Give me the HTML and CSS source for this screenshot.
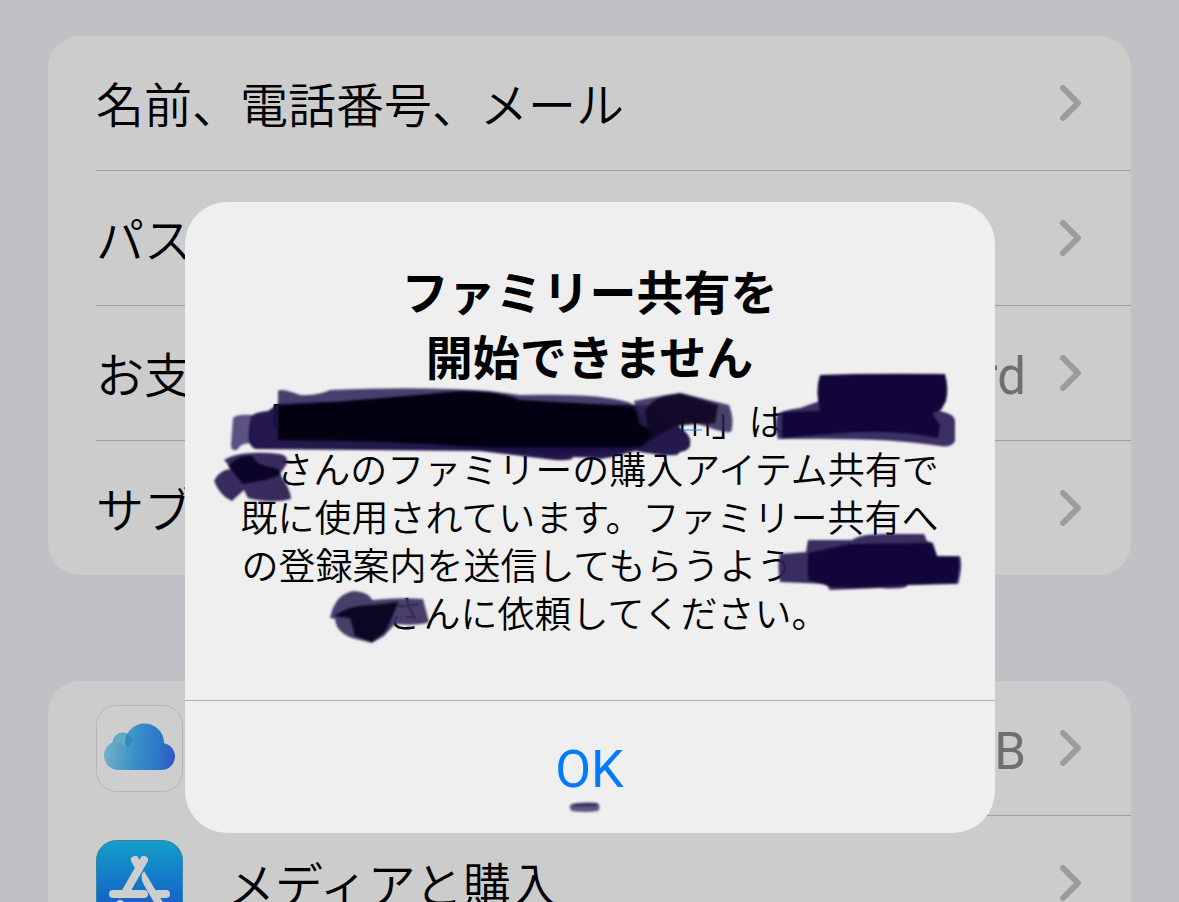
FILE: index.html
```html
<!DOCTYPE html>
<html lang="ja">
<head>
    <meta charset="UTF-8">
    <meta name="viewport" content="width=device-width, initial-scale=1.0">
    <title>ファミリー共有</title>
    <link rel="stylesheet" href="styles.css">
</head>
<body>
    <main class="settings">
        <ul class="group">
            <li class="row">
                <span class="label">名前、電話番号、メール</span>
                <svg class="chevron" viewBox="0 0 22 36"><path d="M3 3 L18 18 L3 33"/></svg>
            </li>
            <li class="row">
                <span class="label">パスワード</span>
                <svg class="chevron" viewBox="0 0 22 36"><path d="M3 3 L18 18 L3 33"/></svg>
            </li>
            <li class="row">
                <span class="label">お支払い</span>
                <span class="value">Card</span>
                <svg class="chevron" viewBox="0 0 22 36"><path d="M3 3 L18 18 L3 33"/></svg>
            </li>
            <li class="row">
                <span class="label">サブスク</span>
                <svg class="chevron" viewBox="0 0 22 36"><path d="M3 3 L18 18 L3 33"/></svg>
            </li>
        </ul>

        <ul class="group">
            <li class="row with-icon">
                <svg class="icon" viewBox="0 0 87 87">
                    <defs>
                        <linearGradient id="cloud" gradientUnits="userSpaceOnUse" x1="8" y1="50" x2="79" y2="58">
                            <stop offset="0" stop-color="#73b0c8"/>
                            <stop offset="0.45" stop-color="#368fc9"/>
                            <stop offset="0.75" stop-color="#2c77c8"/>
                            <stop offset="1" stop-color="#3056c6"/>
                        </linearGradient>
                    </defs>
                    <rect x="0.5" y="0.5" width="86" height="86" rx="20" fill="#cecece" stroke="#b5b5b7"/>
                    <g fill="url(#cloud)">
                        <circle cx="27" cy="38" r="10.5"/>
                        <circle cx="22.5" cy="50.5" r="14.5"/>
                        <circle cx="48.5" cy="38" r="19.5"/>
                        <circle cx="65.5" cy="51.5" r="13.5"/>
                        <rect x="22" y="42" width="44" height="23"/>
                    </g>
                    <path d="M17 37 A10.5 10.5 0 0 1 31 28.5 Q28 35 29 42 Q23 36 17 37 Z" fill="#5faac4"/>
                    <path d="M31 28.5 Q35 31 37 35 Q35 40 31 43 Q28 36 31 28.5 Z" fill="#3489b5"/>
                    <path d="M67.5 38 Q67 43 64 47" fill="none" stroke="#2d66bd" stroke-width="1" opacity="0.5"/>
                </svg>
                <span class="label">iCloud</span>
                <span class="value">GB</span>
                <svg class="chevron" viewBox="0 0 22 36"><path d="M3 3 L18 18 L3 33"/></svg>
            </li>
            <li class="row with-icon">
                <svg class="icon" viewBox="0 0 87 87">
                    <defs>
                        <linearGradient id="store" x1="0" y1="0" x2="0" y2="1">
                            <stop offset="0" stop-color="#149fc9"/>
                            <stop offset="0.7" stop-color="#1565c8"/>
                            <stop offset="1" stop-color="#1553c0"/>
                        </linearGradient>
                    </defs>
                    <rect x="0.5" y="0.5" width="86" height="86" rx="20" fill="url(#store)" stroke="#2d86a8"/>
                    <g fill="none" stroke="#cecece" stroke-width="8" stroke-linecap="round">
                        <path d="M48 20 L29 53"/>
                        <path d="M39 20 L43 27"/>
                        <path d="M17 54 H48"/>
                        <path d="M62 54 H70"/>
                        <path d="M24 64 L21 68"/>
                    </g>
                    <path d="M48 31 Q43 36 48 45 L63 71 Q67 75 71 69 Z" fill="#cecece"/>
                </svg>
                <span class="label">メディアと購入</span>
                <svg class="chevron" viewBox="0 0 22 36"><path d="M3 3 L18 18 L3 33"/></svg>
            </li>
        </ul>
    </main>

    <div class="overlay">
        <div class="alert" role="alertdialog" aria-labelledby="alert-title" aria-describedby="alert-text">
            <div class="alert-body">
                <h1 class="alert-title" id="alert-title">ファミリー共有を<br>開始できません</h1>
                <p class="alert-text" id="alert-text">
                    「<span class="hidden mail"></span>m」は<span class="hidden name"></span><br>
                    <span class="hidden char"></span>さんのファミリーの購入アイテム共有で<br>
                    既に使用されています。ファミリー共有へ<br>
                    の登録案内を送信してもらうよう<span class="hidden name"></span><br>
                    <span class="hidden char"></span>さんに依頼してください。
                </p>
            </div>
            <button type="button" class="alert-button">OK</button>

            <!-- marker strokes -->
            <svg class="marker" viewBox="185 202 810 631" aria-hidden="true">
                <defs>
                    <filter id="soft" x="-5%" y="-5%" width="110%" height="110%" color-interpolation-filters="sRGB">
                        <feGaussianBlur stdDeviation="1"/>
                    </filter>
                </defs>
                <path d="M678 430 H702" stroke="#2f7de0" stroke-width="1"/>
                <g filter="url(#soft)">
                    <!-- mail address -->
                    <path fill="#3a2f62" opacity="0.92" d="M278 391 Q281 388 300 395 Q318 396 330 390 Q420 386 490 391 L520 395 Q600 393 628 402 L636 406 L634 450 L550 455 L278 430 Z"/>
                    <path fill="#4a3f75" opacity="0.9" d="M233 418 Q237 414 252 415 L252 443 Q240 443 238 449 Q231 453 231 444 Z"/>
                    <path fill="#1b0f45" opacity="0.96" d="M251 416 Q256 412 268 411 L278 404 L320 402 L640 405 Q662 404 672 421 L683 430 Q692 436 690 446 Q688 451 680 452 L677 455 Q660 456 635 451 L612 457 L600 459 Q588 457 573 457 Q573 461 555 460 L480 451 L256 449 Q247 447 249 430 Z"/>
                    <path fill="#020011" d="M278 406 Q380 399 460 391 Q500 391 520 400 L630 406 L655 424 Q654 440 640 447 L480 447 Q380 440 278 440 Z"/>
                    <path fill="#2c2252" opacity="0.85" d="M634 401 Q655 397 672 394 L681 393 L729 405 Q735 420 731 432 Q722 433 708 427 L690 422 L660 432 L640 425 Z"/>
                    <path fill="#100724" opacity="0.9" d="M645 411 Q654 396 672 395 L680 393 L718 405 L715 423 L697 424 L675 426 L650 440 Z"/>
                    <!-- name, first line -->
                    <path fill="#33275e" opacity="0.96" d="M777 415 Q779 411 800 408 L817 402 L935 408 L940 411 Q954 414 955 420 L955 441 Q952 448 940 446 Q890 437 778 439 Q774 428 777 415 Z"/>
                    <path fill="#12053a" d="M820 375 Q870 373 945 374 Q949 388 946 401 L941 410 L932 413 L940 425 L938 438 Q890 428 830 434 L782 438 L782 412 L820 411 Q815 390 820 375 Z"/>
                    <!-- left end of second line -->
                    <path fill="#2c2052" opacity="0.94" d="M224 460 Q240 450 280 454 Q290 456 286 465 L280 474 Q291 490 291 499 Q272 504 248 498 L244 490 L232 501 Q220 496 214 481 Q220 469 232 469 Z"/>
                    <path fill="#0c0428" d="M228 466 Q240 454 252 456 L259 464 L278 469 L281 475 L266 480 L243 484 Z"/>
                    <!-- name, fourth line -->
                    <path fill="#2f2359" opacity="0.95" d="M780 554 L806 552 L808 540 L852 540 Q860 534 885 534 L924 534 L927 541 L933 543 L937 556 L960 556 Q963 566 958 584 L908 585 Q906 590 880 588 L830 590 L826 584 L780 582 Q777 566 780 554 Z"/>
                    <path fill="#12053a" d="M808 553 L850 544 L932 543 L937 556 L958 557 Q960 570 956 583 L908 585 Q860 589 832 587 L808 580 Z"/>
                    <!-- left end of fifth line -->
                    <path fill="#3b3060" opacity="0.93" d="M330 618 Q335 593 355 591 Q370 593 372 600 Q400 597 423 599 L429 622 Q420 626 395 624 L384 636 L372 643 L352 638 Q336 632 335 619 Z"/>
                    <path fill="#07021d" opacity="0.93" d="M334 616 Q350 604 374 605 L398 602 Q392 619 385 632 L372 642 L355 636 L350 618 Z"/>
                    <!-- dash under the button -->
                    <path fill="#5e567f" d="M571 804 Q585 801 598 803 Q601 807 598 811 Q585 813 572 811 Q568 808 571 804 Z"/>
                    <path d="M573 805 H597" stroke="#2d2350" stroke-width="2"/>
                </g>
            </svg>
        </div>
    </div>
</body>
</html>
```
FILE: styles.css
```css
* {
    box-sizing: border-box;
}

body {
    margin: 0;
    height: 100vh;
    overflow: hidden;
    background-color: #c1c0c6;
    color: #000;
    font-family: Roboto, "Noto Sans CJK JP", sans-serif;
}

.settings {
    display: flex;
    flex-direction: column;
    gap: 106px;
    padding: 36px 48px;
}

.group {
    margin: 0;
    padding: 0;
    list-style: none;
    background-color: #ccc;
    border-radius: 32px;
}

.row {
    position: relative;
    display: flex;
    align-items: center;
    height: 135px;
    padding: 0 49px 1px 48px;
    font-size: 48px;
    line-height: 64px;
    font-weight: 350;
}

.row:last-child {
    height: 134px;
    padding-bottom: 0;
}

.row:not(:last-child)::after {
    content: "";
    position: absolute;
    left: 48px;
    right: 0;
    bottom: 0;
    height: 1px;
    background-color: #9d9da1;
}

.row.with-icon::after {
    left: 182px;
}

.icon {
    width: 87px;
    height: 87px;
    margin-right: 44px;
}

.label {
    flex: 1;
    padding-top: 8px;
    white-space: nowrap;
}

.value {
    margin-right: 34px;
    padding-top: 8px;
    color: #6f6f73;
    font-size: 51px;
    font-weight: 400;
}

.chevron {
    width: 22px;
    height: 36px;
    fill: none;
    stroke: #9c9c9e;
    stroke-width: 6;
    stroke-linecap: round;
    stroke-linejoin: round;
}

/* alert */
.overlay {
    position: absolute;
    inset: 0;
    display: flex;
    justify-content: center;
    align-items: flex-start;
    padding-top: 202px;
}

.alert {
    position: relative;
    width: 810px;
    background-color: #efeff0;
    border-radius: 42px;
}

.alert-body {
    padding: 59px 48px 60px;
    text-align: center;
}

.alert-title {
    margin: 0 0 9px;
    font-size: 47px;
    line-height: 65px;
    font-weight: 700;
}

.alert-text {
    margin: 0;
    font-size: 37px;
    line-height: 48px;
    font-weight: 350;
    white-space: nowrap;
}

.hidden {
    display: inline-block;
}

.mail {
    width: 392px;
}

.name {
    width: 144px;
}

.char {
    width: 36px;
}

.alert-button {
    display: block;
    width: 100%;
    height: 133px;
    padding: 4px 0 0;
    border: none;
    border-top: 1px solid #b0b0b4;
    border-radius: 0 0 42px 42px;
    background: none;
    color: #007aff;
    font-family: inherit;
    font-size: 52px;
    cursor: pointer;
}

.marker {
    position: absolute;
    top: 0;
    left: 0;
    width: 100%;
    height: 100%;
    pointer-events: none;
}
```
